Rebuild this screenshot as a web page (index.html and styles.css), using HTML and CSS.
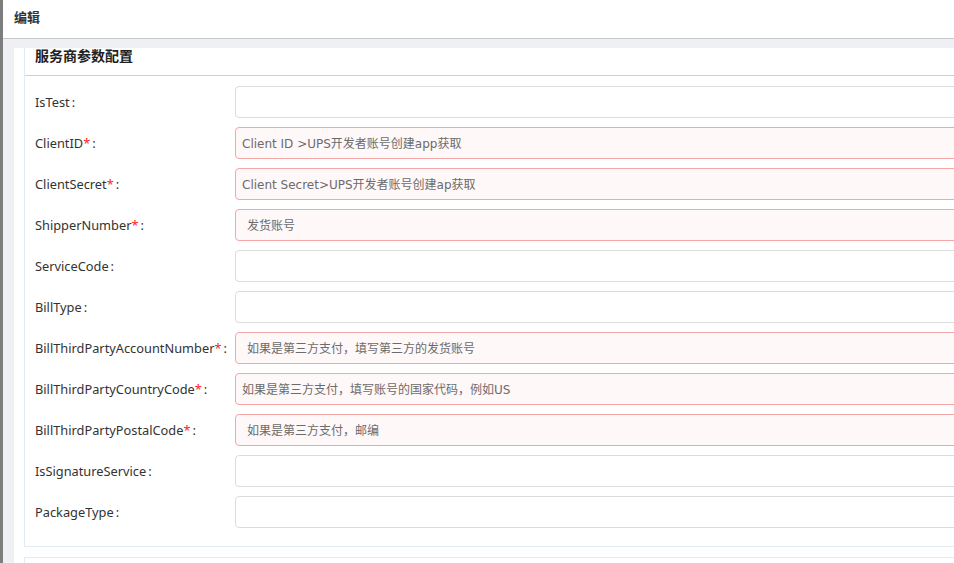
FILE: index.html
```html
<!DOCTYPE html>
<html lang="zh-CN">
<head>
    <meta charset="UTF-8">
    <title>编辑</title>
    <link rel="stylesheet" href="styles.css">
</head>
<body>
    <div class="page">
        <div class="edge"></div>
        <div class="main">
            <div class="head">编辑</div>
            <div class="body">
                <div class="panel">
                    <div class="box">
                        <div class="box-title">服务商参数配置</div>
                        <div class="rows">
                            <div class="row">
                                <label class="label">IsTest</label>
                                <input class="field" type="text">
                            </div>
                            <div class="row">
                                <label class="label">ClientID<span class="req">*</span></label>
                                <input class="field error" type="text" placeholder="Client ID >UPS开发者账号创建app获取">
                            </div>
                            <div class="row">
                                <label class="label">ClientSecret<span class="req">*</span></label>
                                <input class="field error" type="text" placeholder="Client Secret>UPS开发者账号创建ap获取">
                            </div>
                            <div class="row">
                                <label class="label">ShipperNumber<span class="req">*</span></label>
                                <input class="field error indent" type="text" placeholder="发货账号">
                            </div>
                            <div class="row">
                                <label class="label">ServiceCode</label>
                                <input class="field" type="text">
                            </div>
                            <div class="row">
                                <label class="label">BillType</label>
                                <input class="field" type="text">
                            </div>
                            <div class="row">
                                <label class="label">BillThirdPartyAccountNumber<span class="req">*</span></label>
                                <input class="field error indent" type="text" placeholder="如果是第三方支付，填写第三方的发货账号">
                            </div>
                            <div class="row">
                                <label class="label">BillThirdPartyCountryCode<span class="req">*</span></label>
                                <input class="field error" type="text" placeholder="如果是第三方支付，填写账号的国家代码，例如US">
                            </div>
                            <div class="row">
                                <label class="label">BillThirdPartyPostalCode<span class="req">*</span></label>
                                <input class="field error indent" type="text" placeholder="如果是第三方支付，邮编">
                            </div>
                            <div class="row">
                                <label class="label">IsSignatureService</label>
                                <input class="field" type="text">
                            </div>
                            <div class="row">
                                <label class="label">PackageType</label>
                                <input class="field" type="text">
                            </div>
                        </div>
                    </div>
                    <div class="box next"></div>
                </div>
            </div>
        </div>
    </div>
</body>
</html>
```

FILE: styles.css
```css
* {
    margin: 0;
    padding: 0;
    box-sizing: border-box;
}

body {
    font-family: "Noto Sans", "Noto Sans CJK SC", sans-serif;
    font-size: 13px;
    color: #333;
    overflow: hidden;
    height: 100vh;
    background: #fff;
}

.page {
    display: flex;
    height: 100vh;
}

.edge {
    width: 3px;
    flex-shrink: 0;
    background: #7d7d7d;
}

.main {
    flex: 1;
    min-width: 0;
    overflow: hidden;
    background: #eff0f4;
}

.head {
    height: 39px;
    padding: 0 11px;
    line-height: 34px;
    font-weight: bold;
    background: #fff;
    border-bottom: 1px solid #c8c8c8;
    font-family: "Noto Sans CJK SC", sans-serif;
}

.body {
    padding: 9px 0 0 11px;
}

.panel {
    width: 1100px;
    padding: 0 10px;
    background: #fff;
}

.box {
    border: 1px solid #e3ebf3;
    border-top: none;
}

.box-title {
    height: 28px;
    padding: 0 10px;
    line-height: 14px;
    font-size: 14px;
    font-weight: bold;
    color: #222;
    border-bottom: 1px solid #cfcfcf;
    font-family: "Noto Sans CJK SC", sans-serif;
}

.rows {
    display: flex;
    flex-direction: column;
    gap: 9px;
    padding: 10px 10px 18px;
}

.row {
    display: flex;
    align-items: center;
}

.label {
    width: 200px;
    flex-shrink: 0;
    font-size: 12.8px;
    white-space: nowrap;
}

.label::after {
    content: ":";
    padding-left: 2px;
}

.req {
    color: #f22;
}

.field {
    flex: 1;
    height: 32px;
    padding: 2px 6px 0;
    font-family: "DejaVu Sans", "Noto Sans CJK SC", sans-serif;
    font-size: 12px;
    color: #333;
    border: 1px solid #dcdcdc;
    border-radius: 4px;
    background: #fff;
    outline: none;
}

.field::placeholder {
    color: #6b6b6b;
}

.field.error {
    border-color: #f6a6a6;
    background: #fff8f8;
}

.field.indent {
    padding-left: 11px;
}

.box.next {
    margin-top: 10px;
    height: 40px;
    border-top: 1px solid #e3ebf3;
}
```
